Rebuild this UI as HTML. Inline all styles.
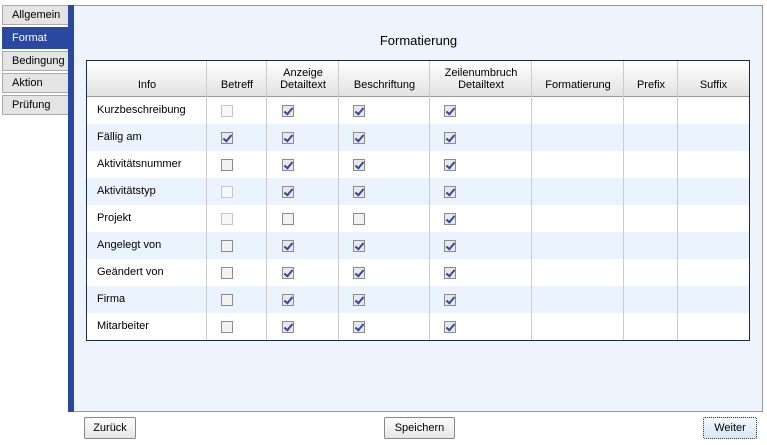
<!DOCTYPE html>
<html><head><meta charset="utf-8"><style>
*{margin:0;padding:0;box-sizing:border-box}
body{width:767px;height:445px;background:#fff;font-family:"Liberation Sans",Arial,sans-serif;font-size:11px;color:#000;position:relative;overflow:hidden}
.tab{position:absolute;left:2px;width:67px;height:20px;background:#e4e4e4;border:1px solid #aaa;border-right:none;padding:3px 0 0 9px;font-size:11px}
.tab.act{background:#2a48a0;color:#fff;border-color:#2a48a0;height:22px;padding-top:4px}
#bar{position:absolute;left:68px;top:5px;width:6px;height:407px;background:#2a48a0}
#panel{position:absolute;left:74px;top:5px;width:689px;height:407px;background:#edf4fe;border:1px solid #999;border-left:none}
#title{position:absolute;left:74px;width:689px;top:33px;text-align:center;font-size:13px}
#tbl{position:absolute;left:86px;top:60px;width:664px;height:281px;border:1px solid #1c2a4a;background:#fff}
#hd{position:absolute;left:0;top:0;width:662px;height:36px;background:linear-gradient(#fff,#e2e2e2);border-bottom:1px solid #999}
.h{position:absolute;top:0;height:36px;display:flex;align-items:flex-end;justify-content:center;text-align:center;padding-bottom:6px;line-height:12px}
.vl{position:absolute;top:0;width:1px;height:279px;background:#ccc}
.row{position:absolute;left:0;width:662px;height:27px}
.row.alt{background:#ebf3fe}
.lb{position:absolute;left:10px;top:7px}
.cb{position:absolute;top:8px;width:12px;height:12px;border:1px solid #8c8c8c;background:#e8e8e8}
.cb.u{background:#f2f2f2}
.cb.d{border-color:#c6c6c6;background:#f7f7f7}
.cb.c::after{content:"";position:absolute;left:3px;top:0px;width:3px;height:7px;border:solid #3548a0;border-width:0 2px 2px 0;transform:rotate(40deg)}
.btn{position:absolute;top:417px;height:22px;border:1px solid #888;border-radius:2px;background:linear-gradient(#fdfdfd,#e6e6e6);font-size:11px;text-align:center;line-height:20px}
</style></head><body>
<div class="tab" style="top:5px">Allgemein</div>
<div class="tab act" style="top:27px">Format</div>
<div class="tab" style="top:51px">Bedingung</div>
<div class="tab" style="top:73px">Aktion</div>
<div class="tab" style="top:95px">Prüfung</div>
<div id="bar"></div>
<div id="panel"></div>
<div id="title">Formatierung</div>
<div id="tbl">
<div id="hd">
<div class="h" style="left:0;width:120px">Info</div>
<div class="h" style="left:120px;width:60px">Betreff</div>
<div class="h" style="left:180px;width:72px">Anzeige<br>Detailtext</div>
<div class="h" style="left:252px;width:91px">Beschriftung</div>
<div class="h" style="left:343px;width:102px">Zeilenumbruch<br>Detailtext</div>
<div class="h" style="left:445px;width:92px">Formatierung</div>
<div class="h" style="left:537px;width:54px">Prefix</div>
<div class="h" style="left:591px;width:71px">Suffix</div>
</div>
<div class="row" style="top:36px"><span class="lb">Kurzbeschreibung</span><i class="cb d" style="left:134px"></i><i class="cb c" style="left:195px"></i><i class="cb c" style="left:266px"></i><i class="cb c" style="left:357px"></i></div>
<div class="row alt" style="top:63px"><span class="lb">Fällig am</span><i class="cb c" style="left:134px"></i><i class="cb c" style="left:195px"></i><i class="cb c" style="left:266px"></i><i class="cb c" style="left:357px"></i></div>
<div class="row" style="top:90px"><span class="lb">Aktivitätsnummer</span><i class="cb u" style="left:134px"></i><i class="cb c" style="left:195px"></i><i class="cb c" style="left:266px"></i><i class="cb c" style="left:357px"></i></div>
<div class="row alt" style="top:117px"><span class="lb">Aktivitätstyp</span><i class="cb d" style="left:134px"></i><i class="cb c" style="left:195px"></i><i class="cb c" style="left:266px"></i><i class="cb c" style="left:357px"></i></div>
<div class="row" style="top:144px"><span class="lb">Projekt</span><i class="cb d" style="left:134px"></i><i class="cb u" style="left:195px"></i><i class="cb u" style="left:266px"></i><i class="cb c" style="left:357px"></i></div>
<div class="row alt" style="top:171px"><span class="lb">Angelegt von</span><i class="cb u" style="left:134px"></i><i class="cb c" style="left:195px"></i><i class="cb c" style="left:266px"></i><i class="cb c" style="left:357px"></i></div>
<div class="row" style="top:198px"><span class="lb">Geändert von</span><i class="cb u" style="left:134px"></i><i class="cb c" style="left:195px"></i><i class="cb c" style="left:266px"></i><i class="cb c" style="left:357px"></i></div>
<div class="row alt" style="top:225px"><span class="lb">Firma</span><i class="cb u" style="left:134px"></i><i class="cb c" style="left:195px"></i><i class="cb c" style="left:266px"></i><i class="cb c" style="left:357px"></i></div>
<div class="row" style="top:252px"><span class="lb">Mitarbeiter</span><i class="cb u" style="left:134px"></i><i class="cb c" style="left:195px"></i><i class="cb c" style="left:266px"></i><i class="cb c" style="left:357px"></i></div>
<div class="vl" style="left:119px"></div>
<div class="vl" style="left:179px"></div>
<div class="vl" style="left:251px"></div>
<div class="vl" style="left:342px"></div>
<div class="vl" style="left:444px"></div>
<div class="vl" style="left:536px"></div>
<div class="vl" style="left:590px"></div>
</div>
<div class="btn" style="left:84px;width:52px">Zurück</div>
<div class="btn" style="left:384px;width:71px">Speichern</div>
<div class="btn" style="left:703px;width:54px;background:linear-gradient(#f4f9ff,#d6e6fa);border:1px dotted #333">Weiter</div>
</body></html>
